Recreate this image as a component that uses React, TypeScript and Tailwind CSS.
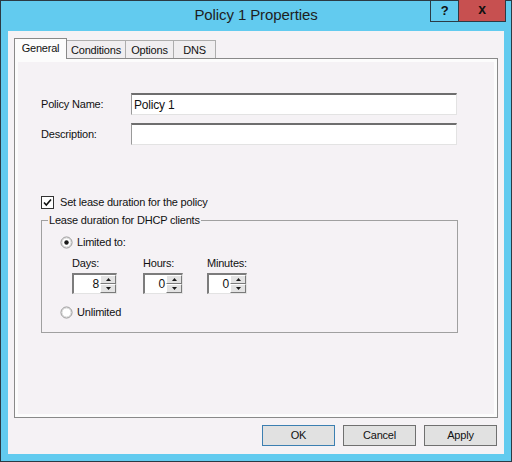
import type { ReactNode } from "react";

function Tab({ label, w, selected }: { label: string; w: string; selected?: boolean }) {
  if (selected) {
    return (
      <div
        className={`relative z-10 -mb-px flex h-[21px] ${w} items-center justify-center border border-b-0 border-[#898989] bg-[#fcfcfc] pb-[2px]`}
      >
        {label}
      </div>
    );
  }
  return (
    <div
      className={`-ml-px flex h-[18px] ${w} items-center justify-center border border-b-0 border-[#adadad] bg-[#f0eef0] pt-[1px]`}
    >
      {label}
    </div>
  );
}

function Arrow({ up }: { up?: boolean }) {
  return (
    <svg width="5" height="3" viewBox="0 0 5 3">
      <polygon points={up ? "2.5,0 5,3 0,3" : "0,0 5,0 2.5,3"} fill="#1a1a1a" />
    </svg>
  );
}

function Spin({ value, w }: { value: string; w: string }) {
  return (
    <div
      className={`flex h-[21px] ${w} border-t-2 border-l-2 border-t-[#7c7c7c] border-l-[#7c7c7c] border-r border-b border-r-[#e3e3e3] border-b-[#e3e3e3] bg-white`}
    >
      <div className="flex flex-1 items-center justify-end pr-[1px] text-[12px]">{value}</div>
      <div className="flex w-[16px] flex-col">
        <div className="flex h-[9px] items-center justify-center border border-t-white border-l-white border-r-[#7a7a7a] border-b-[#7a7a7a] bg-[#e3e3e3]">
          <Arrow up />
        </div>
        <div className="flex h-[9px] items-center justify-center border border-t-white border-l-white border-r-[#7a7a7a] border-b-[#7a7a7a] bg-[#e3e3e3]">
          <Arrow />
        </div>
      </div>
    </div>
  );
}

function Radio({ checked, children }: { checked?: boolean; children: ReactNode }) {
  return (
    <div className="flex h-[13px] items-center">
      <svg width="13" height="13" viewBox="0 0 13 13">
        <circle cx="6.5" cy="6.5" r="5.5" fill="#ffffff" stroke="#8c8c8c" strokeWidth="1" />
        <circle cx="6.5" cy="6.5" r="4.5" fill="none" stroke="#d6d6d6" strokeWidth="1" />
        {checked && <circle cx="6.5" cy="6.5" r="2.2" fill="#1a1a1a" />}
      </svg>
      <span className="ml-[4px]">{children}</span>
    </div>
  );
}

function Button({ label, focused }: { label: string; focused?: boolean }) {
  return (
    <div
      className={`flex h-[21px] w-[73px] items-center justify-center border bg-[#e1e1e1] ${
        focused ? "border-[#3c7fb1]" : "border-[#707070]"
      }`}
    >
      {label}
    </div>
  );
}

export default function App() {
  return (
    <div className="flex h-[462px] w-[512px] flex-col border border-[#2b3a44] bg-[#62cbef] font-['Liberation_Sans',Arial,sans-serif] text-[11px] tracking-[-0.2px] text-[#111]">
      {/* title bar */}
      <div className="grid h-[30px] grid-cols-[1fr_auto_1fr]">
        <div />
        <div className="flex items-center pb-px text-[15px] tracking-[-0.1px] text-[#1e1e1e]">
          Policy 1 Properties
        </div>
        <div className="-mt-px mr-[5px] flex self-start justify-self-end">
          <div className="flex h-[22px] w-[29px] items-center justify-center border border-t-0 border-[#2b3b46] text-[13px] font-bold">
            ?
          </div>
          <div className="-ml-px flex h-[22px] w-[48px] items-center justify-center border border-t-0 border-[#2b3b46] bg-[#c75050] pb-[2px] text-[14px] font-bold">
            x
          </div>
        </div>
      </div>

      {/* client area */}
      <div className="mx-[7px] flex h-[423px] flex-col bg-[#f5f2f5] pt-[7px]">
        <div className="flex h-[20px] items-end pl-[6px]">
          <Tab label="General" w="w-[53px]" selected />
          <Tab label="Conditions" w="w-[60px]" />
          <Tab label="Options" w="w-[49px]" />
          <Tab label="DNS" w="w-[43px]" />
        </div>

        <div className="mx-[6px] h-[360px] border border-[#898989] bg-[#fcfcfc]">
          <div className="m-[3px] h-[352px] bg-[#f5f2f5] pl-[23px] pt-[31px]">
            <div className="grid grid-cols-[90px_326px] items-center gap-y-[8px]">
              <div>Policy Name:</div>
              <div className="flex h-[22px] items-center border-t-2 border-l border-t-[#6e6e6e] border-l-[#9a9a9a] border-r border-b border-r-[#e3e3e3] border-b-[#e3e3e3] bg-white pl-[2px] text-[12px]">
                Policy 1
              </div>
              <div>Description:</div>
              <div className="h-[22px] border-t-2 border-l border-t-[#6e6e6e] border-l-[#9a9a9a] border-r border-b border-r-[#e3e3e3] border-b-[#e3e3e3] bg-white" />
            </div>

            <div className="mt-[51px] flex h-[13px] items-center">
              <svg width="13" height="13" viewBox="0 0 13 13">
                <rect x="0.5" y="0.5" width="12" height="12" fill="#ffffff" stroke="#333333" />
                <path d="M3 6.5 L5.3 9 L10 3.5" fill="none" stroke="#111111" strokeWidth="1.6" />
              </svg>
              <span className="ml-[6px]">Set lease duration for the policy</span>
            </div>

            <fieldset className="mt-[5px] w-[417px] border border-[#a0a0a0] pb-[13px]">
              <legend className="ml-[6px] px-[1px] leading-[13px]">Lease duration for DHCP clients</legend>
              <div className="pl-[18px]">
                <div className="mt-[9px]">
                  <Radio checked>Limited to:</Radio>
                </div>
                <div className="mt-[8px] grid grid-cols-[71px_64px_auto] pl-[12px]">
                  <div className="flex flex-col">
                    <div className="h-[13px] leading-[13px]">Days:</div>
                    <div className="mt-[3px]">
                      <Spin value="8" w="w-[45px]" />
                    </div>
                  </div>
                  <div className="flex flex-col">
                    <div className="h-[13px] leading-[13px]">Hours:</div>
                    <div className="mt-[3px]">
                      <Spin value="0" w="w-[40px]" />
                    </div>
                  </div>
                  <div className="flex flex-col">
                    <div className="h-[13px] leading-[13px]">Minutes:</div>
                    <div className="mt-[3px]">
                      <Spin value="0" w="w-[40px]" />
                    </div>
                  </div>
                </div>
                <div className="mt-[12px]">
                  <Radio>Unlimited</Radio>
                </div>
              </div>
            </fieldset>
          </div>
        </div>

        <div className="mt-[7px] flex justify-end gap-[8px] pr-[7px]">
          <Button label="OK" focused />
          <Button label="Cancel" />
          <Button label="Apply" />
        </div>
      </div>
    </div>
  );
}
